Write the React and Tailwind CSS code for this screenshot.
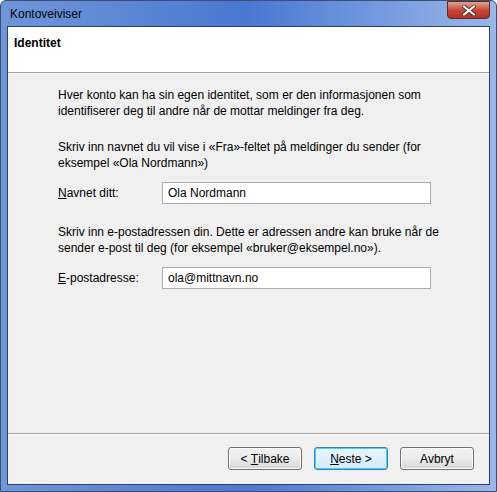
import React from "react";

const font = { fontFamily: '"Liberation Sans", Arial, sans-serif' };

const Button = ({ children, focused }) => (
  <button
    className={`w-[74px] h-[23px] rounded-[3px] text-[12px] text-black flex items-center justify-center border ${
      focused
        ? "border-[#3c7fb1] shadow-[inset_0_0_0_1px_#48d1f8] bg-gradient-to-b from-[#eaf6fd] to-[#d0ebf9]"
        : "border-[#707070] shadow-[inset_0_0_0_1px_#fcfcfc] bg-gradient-to-b from-[#f2f2f2] via-[#ebebeb] to-[#d6d6d6]"
    }`}
  >
    {children}
  </button>
);

const App = () => {
  return (
    <div
      className="w-[497px] h-[492px] relative flex flex-col rounded-t-[6px] border border-[#3a4f73] bg-gradient-to-r from-[#6f96d8] via-[#4a77d2] to-[#9ab7e8] px-[6px] pb-[6px] overflow-hidden"
      style={font}
    >
      {/* title bar */}
      <div className="h-[25px] flex items-center pl-[3px] text-[12px] text-black">
        Kontoveiviser
      </div>
      <div className="absolute top-0 right-[6px] w-[43px] h-[18px] rounded-b-[4px] border border-[#5d2b24] bg-gradient-to-b from-[#e2a294] via-[#c8483a] to-[#b62e1f] flex items-center justify-center">
        <svg width="14" height="11" viewBox="0 0 14 11">
          <path d="M2 1.5 L12 9.5 M12 1.5 L2 9.5" stroke="#3b2a28" strokeWidth="3.6" strokeLinecap="square" />
          <path d="M2 1.5 L12 9.5 M12 1.5 L2 9.5" stroke="#ffffff" strokeWidth="2" strokeLinecap="square" />
        </svg>
      </div>

      {/* client */}
      <div className="flex-1 flex flex-col border border-[#2d4067] bg-[#f0f0f0]">
        <div className="h-[46px] bg-white border-b border-[#a0a0a0] px-[6px] pt-[7px] text-[12px] font-bold text-black">
          Identitet
        </div>
        <div className="h-px bg-white" />

        <div className="flex-1 pl-[50px] pr-[20px] pt-[13px] text-[12px] leading-[16px] text-black whitespace-nowrap">
          <p>
            Hver konto kan ha sin egen identitet, som er den informasjonen som
            <br />
            identifiserer deg til andre når de mottar meldinger fra deg.
          </p>
          <p className="mt-[20px]">
            Skriv inn navnet du vil vise i «Fra»-feltet på meldinger du sender (for
            <br />
            eksempel «Ola Nordmann»)
          </p>
          <div className="mt-[11px] flex items-center">
            <span className="w-[104px]">
              <u>N</u>avnet ditt:
            </span>
            <div className="w-[269px] h-[22px] border border-[#abadb3] bg-white flex items-center px-[5px]">
              Ola Nordmann
            </div>
          </div>
          <p className="mt-[20px]">
            Skriv inn e-postadressen din. Dette er adressen andre kan bruke når de
            <br />
            sender e-post til deg (for eksempel «bruker@eksempel.no»).
          </p>
          <div className="mt-[11px] flex items-center">
            <span className="w-[104px]">
              <u>E</u>-postadresse:
            </span>
            <div className="w-[269px] h-[22px] border border-[#abadb3] bg-white flex items-center px-[5px]">
              ola@mittnavn.no
            </div>
          </div>
        </div>

        <div className="h-px bg-[#a0a0a0]" />
        <div className="h-px bg-white" />
        <div className="h-[49px] flex justify-end items-start pt-[12px] pr-[15px] gap-[12px]">
          <Button>
            &lt;&nbsp;<u>T</u>ilbake
          </Button>
          <Button focused>
            <u>N</u>este&nbsp;&gt;
          </Button>
          <Button>Avbryt</Button>
        </div>
      </div>
    </div>
  );
};

export default App;
